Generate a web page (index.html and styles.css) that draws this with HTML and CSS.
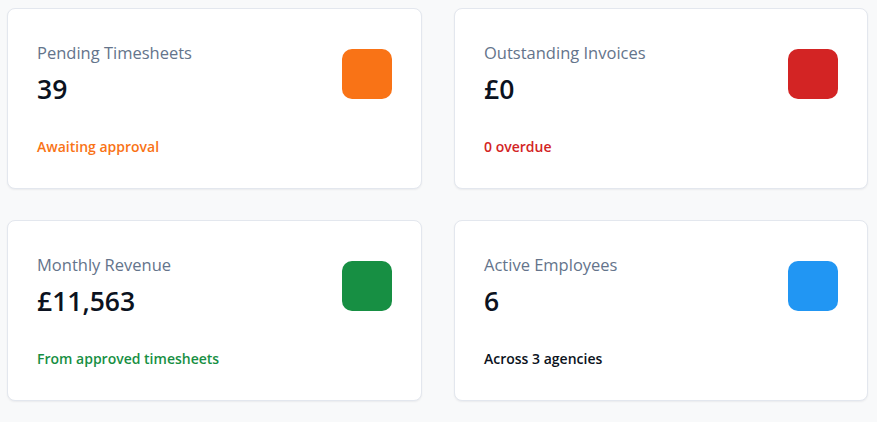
FILE: index.html
```html
<!DOCTYPE html>
<html lang="en">
<head>
<meta charset="utf-8">
<title>Dashboard stats</title>
<link rel="stylesheet" href="styles.css">
</head>
<body>
<main class="stats">
  <section class="card">
    <div class="card-top">
      <div class="info">
        <p class="label">Pending Timesheets</p>
        <p class="value">39</p>
      </div>
      <div class="icon icon-orange"></div>
    </div>
    <p class="note note-orange">Awaiting approval</p>
  </section>
  <section class="card">
    <div class="card-top">
      <div class="info">
        <p class="label">Outstanding Invoices</p>
        <p class="value">£0</p>
      </div>
      <div class="icon icon-red"></div>
    </div>
    <p class="note note-red">0 overdue</p>
  </section>
  <section class="card">
    <div class="card-top">
      <div class="info">
        <p class="label">Monthly Revenue</p>
        <p class="value">£11,563</p>
      </div>
      <div class="icon icon-green"></div>
    </div>
    <p class="note note-green">From approved timesheets</p>
  </section>
  <section class="card">
    <div class="card-top">
      <div class="info">
        <p class="label">Active Employees</p>
        <p class="value">6</p>
      </div>
      <div class="icon icon-blue"></div>
    </div>
    <p class="note note-dark">Across 3 agencies</p>
  </section>
</main>
</body>
</html>
```

FILE: styles.css
```css
* { box-sizing: border-box; }
html, body { margin: 0; padding: 0; }
body {
  background: #f8f9fa;
  font-family: "Open Sans", "Noto Sans", sans-serif;
  width: 877px;
  height: 422px;
  overflow: hidden;
}
.stats {
  display: grid;
  grid-template-columns: 415px 414px;
  grid-auto-rows: 181px;
  column-gap: 32px;
  row-gap: 31px;
  padding: 8px 0 0 7px;
}
.card {
  background: #fff;
  border: 1px solid #e3e7ee;
  border-radius: 8px;
  box-shadow: 0 1px 2px rgba(15, 23, 42, 0.06);
  padding: 30px 29px 0 29px;
  display: flex;
  flex-direction: column;
}
.card-top {
  display: flex;
  justify-content: space-between;
  align-items: flex-start;
}
.info p { margin: 0; }
.label {
  font-size: 16.5px;
  line-height: 26px;
  color: #64748b;
  font-weight: 400;
  margin-top: 1px !important;
}
.value {
  font-size: 26.5px;
  line-height: 40px;
  font-weight: 600;
  color: #0b1220;
  margin-top: 3px !important;
}
.icon {
  width: 50px;
  height: 50px;
  border-radius: 10px;
  margin-top: 10px;
}
.icon-orange { background: #f97316; }
.icon-red { background: #d32424; }
.icon-green { background: #178f43; }
.icon-blue { background: #2196f3; }
.note {
  margin: 28px 0 0;
  font-size: 14px;
  line-height: 20px;
  font-weight: 600;
}
.note-orange { color: #f97316; }
.note-red { color: #d32424; }
.note-green { color: #178f43; }
.note-dark { color: #0b1220; }
```
